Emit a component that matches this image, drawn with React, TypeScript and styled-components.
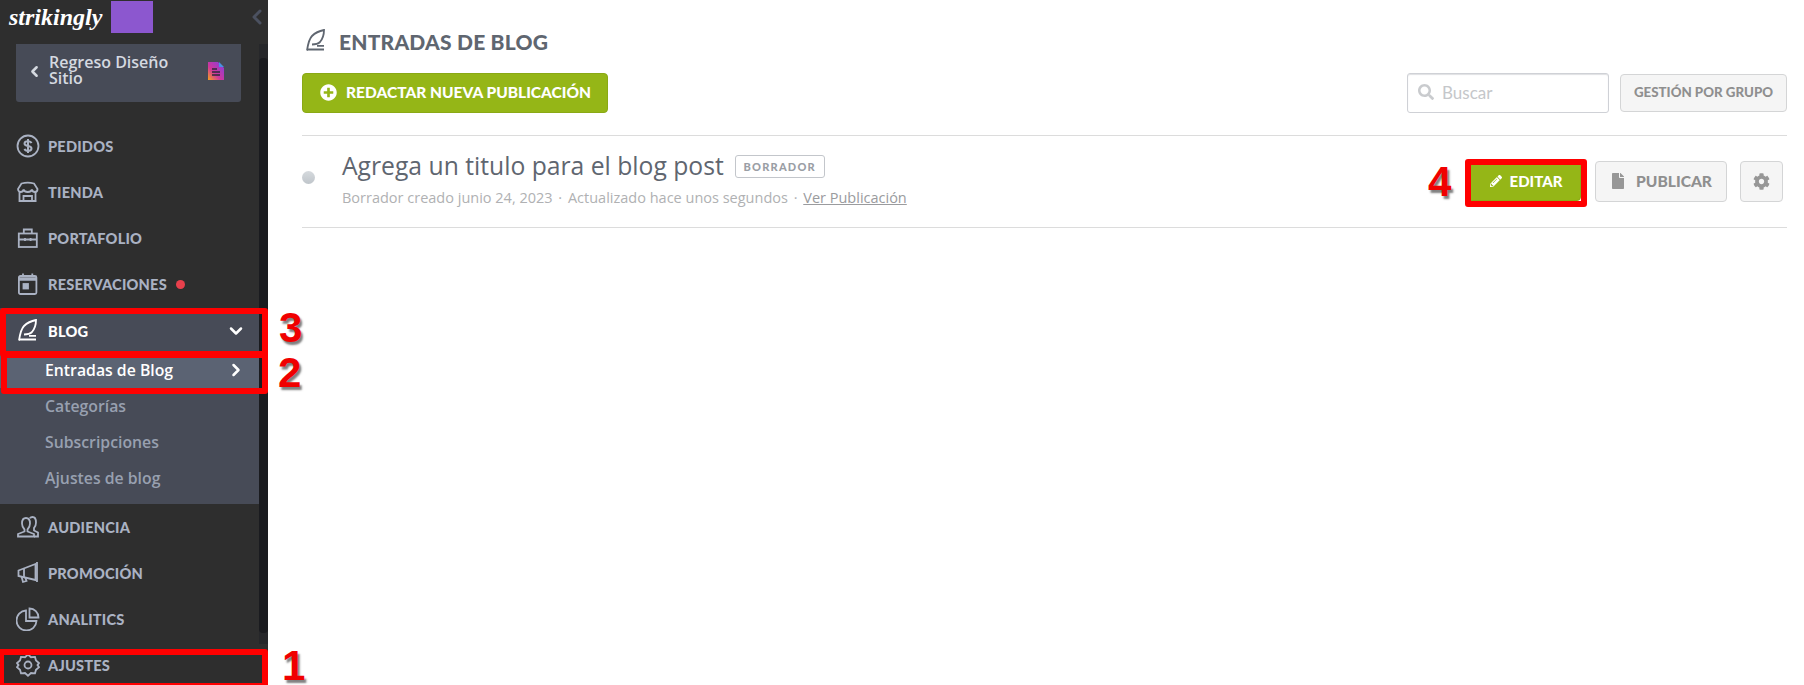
import React from "react";
import styled, { createGlobalStyle } from "styled-components";
import { ChevronDown, ChevronLeft, ChevronRight } from "lucide-react";
import { FaCog, FaFile, FaPencilAlt, FaPlusCircle, FaSearch } from "react-icons/fa";

const GlobalStyle = createGlobalStyle`
  html, body {
    margin: 0;
    padding: 0;
    height: 685px;
    overflow: hidden;
    background: #fff;
    font-family: "Open Sans", sans-serif;
  }
  * { box-sizing: border-box; }
`;

const Page = styled.div`
  position: relative;
  display: flex;
  width: 1804px;
  height: 685px;
  overflow: hidden;
`;

const Sidebar = styled.aside`
  position: relative;
  flex: 0 0 268px;
  height: 685px;
  overflow: hidden;
  background: #2e2e2e;
`;

const Brand = styled.div`
  display: flex;
  align-items: flex-start;
  height: 44px;
  padding: 1px 0 0 9px;
`;

const Logo = styled.span`
  width: 102px;
  padding-top: 1px;
  font-family: "Liberation Serif", serif;
  font-style: italic;
  font-weight: 700;
  font-size: 24px;
  line-height: 30px;
  color: #fff;
`;

const Swatch = styled.div`
  width: 42px;
  height: 32px;
  background: #8c57cf;
`;

const Collapse = styled.div`
  position: absolute;
  top: 5px;
  left: 245px;
  color: #4b5160;
`;

const BackButton = styled.div`
  display: flex;
  align-items: center;
  width: 225px;
  height: 58px;
  margin: 0 0 0 16px;
  padding: 0 17px 4px 10px;
  background: #474b57;
  border-radius: 0 0 3px 3px;
  color: #d5d9e0;
`;

const BackLabel = styled.span`
  flex: 1;
  margin: 0 0 2px 6px;
  max-width: 130px;
  font-weight: 600;
  font-size: 16px;
  line-height: 16px;
`;

const DocIcon = styled.svg`
  margin-left: auto;
`;

const Nav = styled.nav`
  margin-top: 21px;
`;

const NavItem = styled.div<{ $active?: boolean }>`
  display: flex;
  align-items: center;
  width: 259px;
  height: 46px;
  padding: 0 13px 0 16px;
  color: ${(p) => (p.$active ? "#fff" : "#aab2c3")};
  font-family: Lato, sans-serif;
  font-weight: 900;
  font-size: 14.6px;
  letter-spacing: 0.2px;
`;

const NavIcon = styled.svg`
  flex: 0 0 24px;
  width: 24px;
  height: 24px;
  margin-right: 8px;
  fill: none;
  stroke: currentColor;
  stroke-width: 1.8;
`;

const TitleIcon = styled(NavIcon)`
  margin-right: 0;
  color: #5f6670;
`;

const Dot = styled.span`
  width: 9px;
  height: 9px;
  margin-left: 9px;
  border-radius: 50%;
  background: #e8404c;
`;

const BlogGroup = styled.div`
  width: 259px;
  margin-top: 1px;
  background: #474b57;
`;

const Spacer = styled.span`
  flex: 1;
`;

const SubList = styled.div`
  margin-top: -2px;
  padding-bottom: 8px;
`;

const SubItem = styled.div<{ $active?: boolean }>`
  display: flex;
  align-items: center;
  justify-content: space-between;
  height: 36px;
  padding: 0 13px 0 45px;
  font-weight: 600;
  font-size: 15.8px;
  color: ${(p) => (p.$active ? "#fff" : "#98a0b0")};
  background: ${(p) => (p.$active ? "#5b6373" : "transparent")};
`;

const ScrollTrack = styled.div`
  position: absolute;
  top: 44px;
  left: 259px;
  width: 9px;
  height: 600px;
  background: #26272a;
`;

const ScrollThumb = styled.div`
  position: absolute;
  top: 14px;
  left: 0;
  width: 9px;
  height: 575px;
  border-radius: 4px;
  background: #1a1b1f;
`;

const Main = styled.main`
  flex: 1;
  padding: 0 17px 0 34px;
`;

const TitleRow = styled.div`
  display: flex;
  align-items: center;
  height: 73px;
  padding: 9px 0 0 2px;
  color: #5f6670;
`;

const PageTitle = styled.h1`
  margin: 0 0 0 11px;
  font-family: Lato, sans-serif;
  font-weight: 900;
  font-size: 21px;
  letter-spacing: 0.2px;
`;

const Toolbar = styled.div`
  display: flex;
  align-items: center;
  justify-content: space-between;
  height: 40px;
  margin-bottom: 22px;
`;

const Button = styled.button<{ $tone?: "green" | "grey" }>`
  display: inline-flex;
  align-items: center;
  justify-content: center;
  gap: 9px;
  padding: 0;
  font-family: Lato, sans-serif;
  font-weight: 900;
  font-size: 15px;
  border-radius: 4px;
  border: 1px solid ${(p) => (p.$tone === "green" ? "#8aa915" : "#d4d5d6")};
  background: ${(p) => (p.$tone === "green" ? "#95b617" : "#f5f5f5")};
  color: ${(p) => (p.$tone === "green" ? "#fff" : "#8f8f8f")};
`;

const NewButton = styled(Button)`
  justify-content: flex-start;
  width: 306px;
  height: 40px;
  padding: 0 0 2px 17px;
  font-size: 15.5px;
`;

const ToolbarRight = styled.div`
  display: flex;
  align-items: center;
  gap: 11px;
`;

const SearchBox = styled.div`
  display: flex;
  align-items: center;
  gap: 8px;
  width: 202px;
  height: 40px;
  padding: 0 0 2px 10px;
  border: 1px solid #cfd1d6;
  border-radius: 3px;
  box-shadow: inset 0 1px 1px #dfe0e3;
  font-family: Lato, sans-serif;
  font-size: 17px;
  color: #c5c7ca;
`;

const GroupButton = styled(Button)`
  width: 167px;
  height: 38px;
  padding-bottom: 2px;
  font-size: 13.3px;
`;

const PostRow = styled.div`
  display: flex;
  align-items: center;
  height: 93px;
  border-top: 1px solid #dcdcdc;
  border-bottom: 1px solid #dcdcdc;
`;

const StatusDot = styled.span`
  flex: 0 0 13px;
  height: 13px;
  margin: 0 27px 8px 0;
  border-radius: 50%;
  background: linear-gradient(#d6dade, #bfc5ca);
`;

const PostBody = styled.div`
  flex: 1;
  margin-bottom: 9px;
`;

const PostTitleRow = styled.div`
  display: flex;
  align-items: center;
  gap: 11px;
  height: 36px;
`;

const PostTitle = styled.h2`
  margin: 0;
  font-weight: 400;
  font-size: 24.7px;
  color: #5f6670;
`;

const Badge = styled.span`
  display: flex;
  align-items: center;
  justify-content: center;
  width: 90px;
  height: 23px;
  margin-top: 2px;
  border: 1px solid #c3c6cb;
  border-radius: 3px;
  font-family: Lato, sans-serif;
  font-weight: 900;
  font-size: 11px;
  letter-spacing: 1.2px;
  color: #9a9ea5;
`;

const PostMeta = styled.div`
  margin-top: 5px;
  font-size: 14.5px;
  color: #b0b1b3;
`;

const MetaSep = styled.span`
  margin: 0 2px;
`;

const MetaLink = styled.a`
  color: #9a9b9e;
  text-decoration: underline;
`;

const PostActions = styled.div`
  display: flex;
  align-items: center;
  gap: 13px;
  margin: 0 4px 1px 0;
`;

const EditButton = styled(Button)`
  width: 116px;
  height: 40px;
  gap: 8px;
  padding-left: 6px;
  font-size: 15px;
  margin-right: 1px;
`;

const PublishButton = styled(Button)`
  width: 132px;
  height: 41px;
  gap: 10px;
  font-size: 15.6px;
`;

const GearButton = styled(Button)`
  width: 43px;
  height: 41px;
`;

const Frame = styled.div<{ $x: number; $y: number; $w: number; $h: number }>`
  position: absolute;
  left: ${(p) => p.$x}px;
  top: ${(p) => p.$y}px;
  width: ${(p) => p.$w}px;
  height: ${(p) => p.$h}px;
  border: 6px solid #ff0000;
  border-radius: 3px;
  pointer-events: none;
`;

const Mark = styled.span<{ $x: number; $y: number }>`
  position: absolute;
  left: ${(p) => p.$x}px;
  top: ${(p) => p.$y}px;
  font-family: "Liberation Sans", sans-serif;
  font-weight: 700;
  font-size: 42px;
  line-height: 36px;
  color: #f00000;
  -webkit-text-stroke: 2px #fff;
  paint-order: stroke fill;
  text-shadow: 2px 3px 2px rgba(0, 0, 0, 0.5);
`;

function QuillPaths() {
  return (
    <>
      <path d="M3 21.5C4 15 5 10 8 7c3-3 7-5 12-6 0 5-1.500 9-4 12-2 2-5 2.500-8 2.500" />
      <path d="M13 16.800h7M3 20.500h17" />
    </>
  );
}

const icons: Record<string, React.ReactNode> = {
  PEDIDOS: (
    <>
      <circle cx="12" cy="12" r="10.500" />
      <path d="M15.500 9.200c-.5-1.300-1.800-2-3.500-2-2 0-3.500 1-3.500 2.400s1.300 2 3.500 2.400 3.500 1 3.500 2.400-1.500 2.400-3.500 2.400c-1.700 0-3-.7-3.500-2M12 5v14" strokeWidth="2" />
    </>
  ),
  TIENDA: (
    <>
      <path d="M3.500 12v9h16v-9M7.500 21v-5h8.500v5M3 21h17.500" />
      <path d="M5.500 3.500c4-1 8.500-1 12.500 0L21.500 9c0 2-1.200 3-2.600 3s-2.700-1-3-2.500c-.4 1.500-2 2.500-4.100 2.500s-3.800-1-4.200-2.500c-.3 1.500-1.600 2.500-3 2.500S2 11 2 9z" />
    </>
  ),
  PORTAFOLIO: (
    <>
      <rect x="2.800" y="7.500" width="18" height="13.500" />
      <path d="M7.800 7.500V3.500h8v4M2.800 13.500h18M9 12v3M14.600 12v3" />
    </>
  ),
  RESERVACIONES: (
    <>
      <rect x="2.900" y="4" width="17.500" height="18" rx="1.500" />
      <path d="M7 1.500v3M16.300 1.500v3" />
      <path d="M2.900 7h17.500" strokeWidth="3.500" />
      <rect x="7.500" y="12" width="4.500" height="4.500" fill="currentColor" />
    </>
  ),
  AUDIENCIA: (
    <>
      <path d="M2 21.500v-2.500l6.500-2.500v-2C7 13 6 11 6 8.500 6 5 7.800 3 10 3s4 2 4 5.500c0 2.500-1 4.500-2.500 6v2l6.500 2.500v2.500z" />
      <path d="M13.800 3.200C14.500 2.300 15.500 2 16.500 2c2.200 0 3.500 2 3.500 5.500 0 2.500-.8 4.500-2 5.500v2.500l4 2v4h-4" />
    </>
  ),
  "PROMOCIÓN": (
    <>
      <path d="M2.500 9.500L19.500 3v16L2.500 15z" />
      <path d="M5.500 15.500l1.500 5.500 3.500-1-1.200-3.500M8 8v8M21 1v20" />
    </>
  ),
  ANALITICS: (
    <>
      <path d="M10 3.500a10 10 0 1 0 10.500 10.500H10z" />
      <path d="M13.500 1.500a9 9 0 0 1 9 9h-9z" />
    </>
  ),
  AJUSTES: (
    <>
      <path d="M12 1.500l3 2.700 4-.3 1 3.600 3 2.600-1.500 2 1.500 2-3 2.600-1 3.600-4-.3-3 2.700-3-2.700-4 .3-1-3.600-3-2.600 1.500-2-1.500-2 3-2.600 1-3.600 4 .3z" />
      <circle cx="12" cy="12" r="3.500" />
    </>
  ),
};

function Item({ label, dot }: { label: string; dot?: boolean }) {
  return (
    <NavItem>
      <NavIcon viewBox="0 0 24 24">{icons[label]}</NavIcon>
      {label}
      {dot && <Dot />}
    </NavItem>
  );
}

export default function App() {
  return (
    <Page>
      <GlobalStyle />
      <Sidebar>
        <Brand>
          <Logo>strikingly</Logo>
          <Swatch />
        </Brand>
        <Collapse>
          <ChevronLeft size={24} strokeWidth={3} />
        </Collapse>
        <BackButton>
          <ChevronLeft size={17} strokeWidth={3.5} />
          <BackLabel>Regreso Diseño Sitio</BackLabel>
          <DocIcon width="16" height="18" viewBox="0 0 16 18">
            <defs>
              <linearGradient id="docGrad" x1="0" y1="1" x2="1" y2="0">
                <stop offset="0" stopColor="#f5a31c" />
                <stop offset="0.4" stopColor="#d0369c" />
                <stop offset="1" stopColor="#7f3fe0" />
              </linearGradient>
            </defs>
            <path d="M0 0h10l6 6v12H0z" fill="url(#docGrad)" />
            <path d="M11 0l5 5h-5z" fill="#4a90e2" />
            <path d="M4 7h5M4 10h8M4 13h8" stroke="#2b2b38" strokeWidth="1.300" />
          </DocIcon>
        </BackButton>
        <Nav>
          <Item label="PEDIDOS" />
          <Item label="TIENDA" />
          <Item label="PORTAFOLIO" />
          <Item label="RESERVACIONES" dot />
          <BlogGroup>
            <NavItem $active>
              <NavIcon viewBox="0 0 24 24">
                <QuillPaths />
              </NavIcon>
              BLOG
              <Spacer />
              <ChevronDown size={20} strokeWidth={3} />
            </NavItem>
            <SubList>
              <SubItem $active>
                Entradas de Blog
                <ChevronRight size={20} strokeWidth={3} />
              </SubItem>
              <SubItem>Categorías</SubItem>
              <SubItem>Subscripciones</SubItem>
              <SubItem>Ajustes de blog</SubItem>
            </SubList>
          </BlogGroup>
          <Item label="AUDIENCIA" />
          <Item label="PROMOCIÓN" />
          <Item label="ANALITICS" />
          <Item label="AJUSTES" />
        </Nav>
        <ScrollTrack>
          <ScrollThumb />
        </ScrollTrack>
      </Sidebar>
      <Main>
        <TitleRow>
          <TitleIcon viewBox="0 0 24 24">
            <QuillPaths />
          </TitleIcon>
          <PageTitle>ENTRADAS DE BLOG</PageTitle>
        </TitleRow>
        <Toolbar>
          <NewButton $tone="green">
            <FaPlusCircle size={17} color="#fff" />
            REDACTAR NUEVA PUBLICACIÓN
          </NewButton>
          <ToolbarRight>
            <SearchBox>
              <FaSearch size={16} color="#c9cbce" />
              Buscar
            </SearchBox>
            <GroupButton>GESTIÓN POR GRUPO</GroupButton>
          </ToolbarRight>
        </Toolbar>
        <PostRow>
          <StatusDot />
          <PostBody>
            <PostTitleRow>
              <PostTitle>Agrega un titulo para el blog post</PostTitle>
              <Badge>BORRADOR</Badge>
            </PostTitleRow>
            <PostMeta>
              Borrador creado junio 24, 2023<MetaSep> · </MetaSep>Actualizado hace unos segundos<MetaSep> · </MetaSep>
              <MetaLink>Ver Publicación</MetaLink>
            </PostMeta>
          </PostBody>
          <PostActions>
            <EditButton $tone="green">
              <FaPencilAlt size={12} />
              EDITAR
            </EditButton>
            <PublishButton>
              <FaFile size={16} color="#979797" />
              PUBLICAR
            </PublishButton>
            <GearButton>
              <FaCog size={17} color="#979797" />
            </GearButton>
          </PostActions>
        </PostRow>
      </Main>

      <Frame $x={0} $y={308} $w={268} $h={49} />
      <Frame $x={1} $y={352} $w={267} $h={42} />
      <Frame $x={-2} $y={649} $w={270} $h={40} />
      <Frame $x={1465} $y={159} $w={122} $h={48} />
      <Mark $x={279} $y={310}>3</Mark>
      <Mark $x={278} $y={355}>2</Mark>
      <Mark $x={282} $y={648}>1</Mark>
      <Mark $x={1428} $y={164}>4</Mark>
    </Page>
  );
}
